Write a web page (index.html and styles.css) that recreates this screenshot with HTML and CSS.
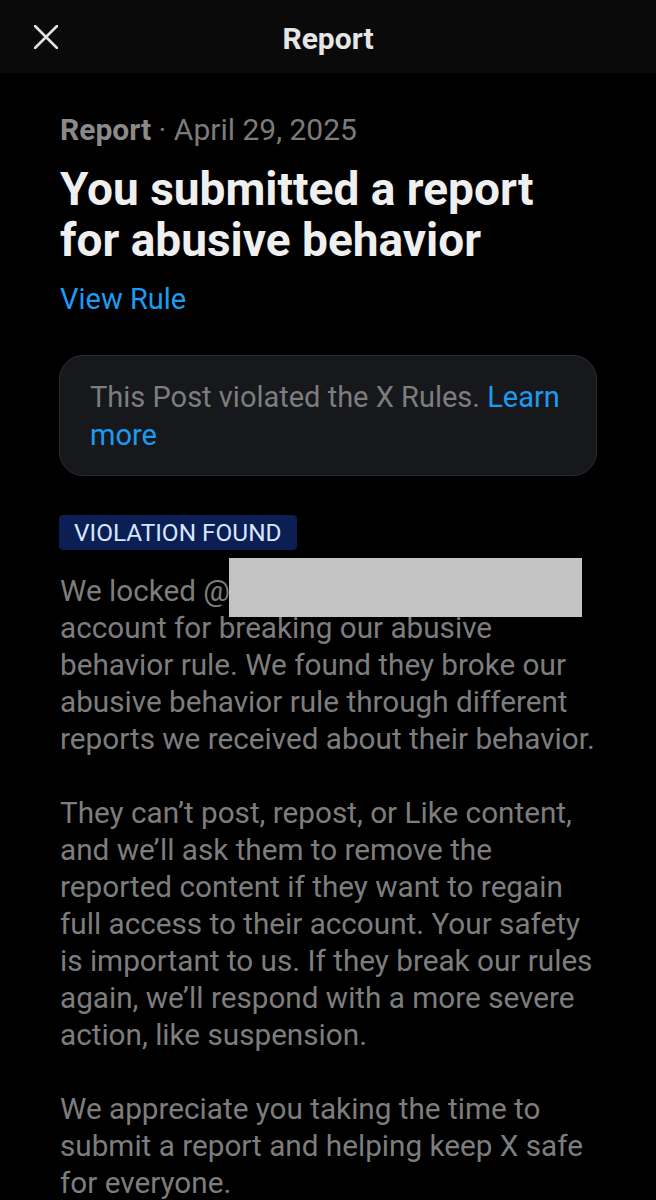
FILE: index.html
```html
<!DOCTYPE html>
<html lang="en">
<head>
    <meta charset="UTF-8">
    <meta name="viewport" content="width=device-width, initial-scale=1.0">
    <title>Report</title>
    <link rel="stylesheet" href="styles.css">
</head>
<body>
    <header class="top-bar">
        <button class="close-btn" aria-label="Close">
            <svg viewBox="0 0 24 24" width="24" height="24">
                <path d="M1 1 L23 23 M23 1 L1 23" stroke="#e2e2e2" stroke-width="2.6" stroke-linecap="round" fill="none"/>
            </svg>
        </button>
        <h1>Report</h1>
    </header>

    <main class="content">
        <p class="meta"><strong>Report</strong> · April 29, 2025</p>
        <h2 class="title">You submitted a report<br>for abusive behavior</h2>
        <a class="link view-rule" href="#">View Rule</a>

        <div class="notice">
            This Post violated the X Rules. <a class="link" href="#">Learn<br>more</a>
        </div>

        <span class="badge">VIOLATION FOUND</span>

        <div class="body-text">
            <p>We locked @<br>account for breaking our abusive<br>behavior rule. We found they broke our<br>abusive behavior rule through different<br>reports we received about their behavior.</p>
            <p>They can’t post, repost, or Like content,<br>and we’ll ask them to remove the<br>reported content if they want to regain<br>full access to their account. Your safety<br>is important to us. If they break our rules<br>again, we’ll respond with a more severe<br>action, like suspension.</p>
            <p>We appreciate you taking the time to<br>submit a report and helping keep X safe<br>for everyone.</p>
            <div class="redacted"></div>
        </div>
    </main>
</body>
</html>
```

FILE: styles.css
```css
/* Base */
body {
    margin: 0;
    background: #000;
    color: #7d7d7d;
    font-family: Roboto, "Liberation Sans", sans-serif;
}

/* Header bar */
.top-bar {
    height: 73px;
    background: #0a0a0a;
    display: flex;
    align-items: center;
    justify-content: center;
    position: relative;
}

.top-bar h1 {
    margin: 0;
    padding-top: 3px;
    font-size: 30px;
    font-weight: 700;
    color: #e6e6e6;
}

.close-btn {
    position: absolute;
    left: 34px;
    top: 25px;
    padding: 0;
    border: none;
    background: none;
    width: 24px;
    height: 24px;
}

.close-btn svg {
    display: block;
}

/* Main content */
.content {
    padding: 39px 59px 0 60px;
}

.meta {
    margin: 0;
    font-size: 30px;
    line-height: 36px;
    color: #7b7b7b;
}

.meta strong {
    color: #8a8a8a;
}

.title {
    margin: 16px 0 0;
    font-size: 46px;
    line-height: 51px;
    font-weight: 700;
    color: #efefef;
}

.link {
    color: #1d9bf0;
    text-decoration: none;
}

.view-rule {
    display: block;
    margin-top: 15px;
    font-size: 29px;
    line-height: 36px;
}

/* Notice box */
.notice {
    margin-top: 38px;
    margin-left: -1px;
    padding: 22px 30px 21px;
    background: #16181c;
    border: 1px solid #2a2d31;
    border-radius: 24px;
    font-size: 29px;
    line-height: 38px;
    color: #7d7d7d;
}

/* Badge */
.badge {
    display: inline-block;
    margin-top: 39px;
    margin-left: -1px;
    padding: 0 15px;
    height: 35px;
    line-height: 35px;
    background: #0b1f55;
    color: #d8e6ff;
    font-size: 24.4px;
    border-radius: 4px;
}

/* Body paragraphs */
.body-text {
    position: relative;
    margin-top: 22px;
    font-size: 29.7px;
    line-height: 37px;
}

.body-text p {
    margin: 0 0 37px;
}

.redacted {
    position: absolute;
    left: 169px;
    top: -14px;
    width: 353px;
    height: 59px;
    background: #c3c3c3;
}
```
